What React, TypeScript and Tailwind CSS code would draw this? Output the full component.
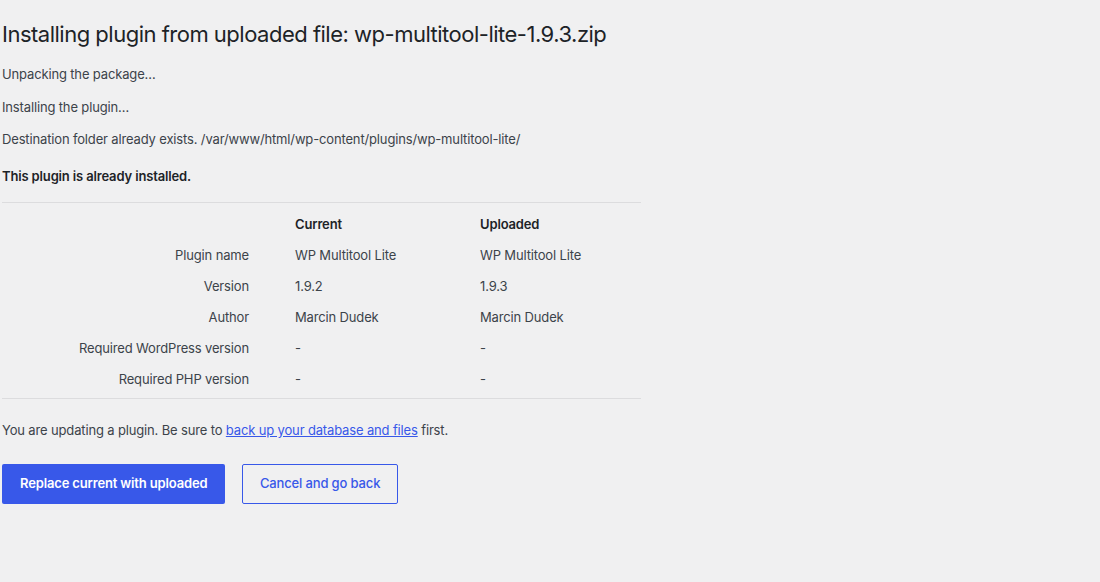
const rows: [string, string, string][] = [
  ["Plugin name", "WP Multitool Lite", "WP Multitool Lite"],
  ["Version", "1.9.2", "1.9.3"],
  ["Author", "Marcin Dudek", "Marcin Dudek"],
  ["Required WordPress version", "-", "-"],
  ["Required PHP version", "-", "-"],
];

export default function App() {
  return (
    <div
      className="min-h-[582px] w-full bg-[#f0f0f1] pl-[2px] text-[13px] leading-[19.5px] tracking-[-0.15px] text-[#3c434a]"
      style={{ fontFamily: "Inter, 'Liberation Sans', sans-serif" }}
    >
      <div className="w-[639px]">
        <h1 className="whitespace-nowrap pt-[19px] text-[22px] leading-[30px] font-normal tracking-[-0.5px] text-[#1d2327]">
          Installing plugin from uploaded file: wp-multitool-lite-1.9.3.zip
        </h1>

        <p className="mt-[16px]">Unpacking the package…</p>
        <p className="mt-[13px]">Installing the plugin…</p>
        <p className="mt-[13px]">
          Destination folder already exists. /var/www/html/wp-content/plugins/wp-multitool-lite/
        </p>
        <p className="mt-[17px] font-semibold text-[#1d2327]">This plugin is already installed.</p>

        {/* comparison table */}
        <div className="mt-[16px] border-y border-[#dcdcde] pt-[6px] pb-[3px]">
          <div className="grid h-[31px] grid-cols-[293px_185px_1fr] items-center font-semibold text-[#1d2327]">
            <span />
            <span>Current</span>
            <span>Uploaded</span>
          </div>
          {rows.map(([label, current, uploaded]) => (
            <div key={label} className="grid h-[31px] grid-cols-[293px_185px_1fr] items-center">
              <span className="pr-[46px] text-right">{label}</span>
              <span>{current}</span>
              <span>{uploaded}</span>
            </div>
          ))}
        </div>

        <p className="mt-[22px]">
          You are updating a plugin. Be sure to{" "}
          <a href="#" className="text-[#3858e9] underline">
            back up your database and files
          </a>{" "}
          first.
        </p>

        <div className="mt-[23px] flex items-center gap-[17px]">
          <button className="h-[40px] rounded-[2px] bg-[#3858e9] px-[18px] font-semibold tracking-[-0.15px] text-white">
            Replace current with uploaded
          </button>
          <button className="h-[40px] rounded-[2px] border border-[#3858e9] px-[16.5px] font-medium tracking-[-0.15px] text-[#3858e9]">
            Cancel and go back
          </button>
        </div>
      </div>
    </div>
  );
}
